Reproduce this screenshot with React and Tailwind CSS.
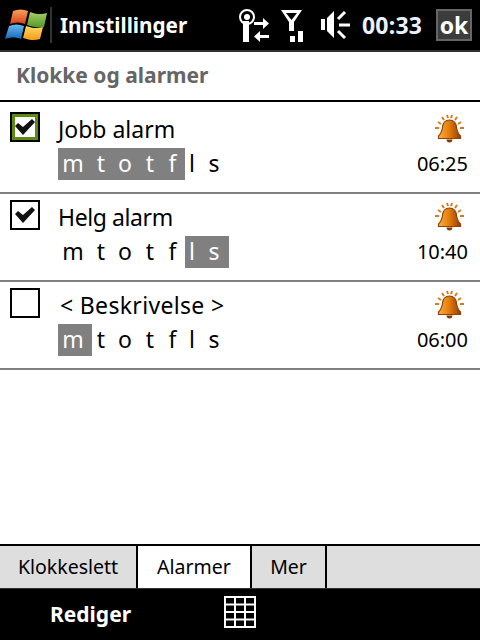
import React from "react";

const cells = [
  ["m", "w-[34px] pr-1"],
  ["t", "w-[18px]"],
  ["o", "w-[30px]"],
  ["t", "w-[20px]"],
  ["f", "w-[25px]"],
  ["l", "w-[14px]"],
  ["s", "w-[30px]"],
];

function Days({ active }) {
  return (
    <div className="flex h-8 text-[23px] leading-8 text-black">
      {cells.map(([l, cls], i) => (
        <span
          key={i}
          className={"flex items-center justify-center pb-[2px] " + cls + " " + (active.includes(i) ? "bg-[#808080] text-white" : "")}
        >
          {l}
        </span>
      ))}
    </div>
  );
}

function Bell() {
  return (
    <svg width="32" height="30" viewBox="0 0 32 30">
      <defs>
        <linearGradient id="bellg" x1="0" y1="0" x2="1" y2="0">
          <stop offset="0" stopColor="#f9b040" />
          <stop offset="0.45" stopColor="#e8800e" />
          <stop offset="1" stopColor="#983c04" />
        </linearGradient>
      </defs>
      <g stroke="#d9791a" strokeWidth="2" fill="none">
        <path d="M8 3l2 3M13 1l1 3M18 1l-1 3M23 3l-2 3M4 8l3 2M27 8l-3 2M1 14h4M26 14h4" />
      </g>
      <path d="M15.500 6c-4.500 0-6.500 3-7 7-.4 4-1.500 6.500-4 9v2.500h22V22c-2.500-2.500-3.600-5-4-9-.5-4-2.500-7-7-7z" fill="url(#bellg)" stroke="#8e4208" strokeWidth="1.200" />
      <path d="M12.500 25.500h6c0 2-1.300 3-3 3s-3-1-3-3z" fill="#7c3806" />
    </svg>
  );
}

function Check({ checked, focus }) {
  return (
    <div className={"flex h-[30px] w-[30px] items-center justify-center border-2 border-black bg-white " + (focus ? "shadow-[inset_0_0_0_3px_#5c8a12]" : "")}>
      {checked && (
        <svg width="22" height="18" viewBox="0 0 22 18">
          <path d="M1 8l3-3 5 4 9-8 3 3-12 13z" fill="#111" />
        </svg>
      )}
    </div>
  );
}

function Row({ title, titleClass, active, time, checked, focus, first }) {
  return (
    <div className={"flex flex-none border-b-2 border-[#808080] pl-[10px] pr-3 " + (first ? "h-[92px] pt-[10px]" : "h-[88px] pt-[6px]")}>
      <Check checked={checked} focus={focus} />
      <div className="ml-[18px] flex flex-1 flex-col">
        <div className={"h-9 text-[23px] leading-[34px] text-black " + (titleClass || "")}>{title}</div>
        <Days active={active} />
      </div>
      <div className="flex flex-col items-end">
        <div className="mr-[2px] mt-[2px] h-[35px]"><Bell /></div>
        <div className="text-[20px] leading-[30px] text-black">{time}</div>
      </div>
    </div>
  );
}

export default function App() {
  return (
    <div className="flex h-[640px] w-[480px] flex-col overflow-hidden bg-white font-['Noto_Sans','Open_Sans',sans-serif]">
      <header className="flex h-[52px] flex-none items-center border-b-2 border-[#303030] bg-black text-white">
        <svg className="ml-1 flex-none" width="44" height="38" viewBox="0 0 44 38">
          <defs>
            <linearGradient id="wr" x1="0" y1="0" x2="0" y2="1"><stop offset="0" stopColor="#f8a45a" /><stop offset="1" stopColor="#d8401c" /></linearGradient>
            <linearGradient id="wg" x1="0" y1="0" x2="0" y2="1"><stop offset="0" stopColor="#a8d060" /><stop offset="1" stopColor="#54982a" /></linearGradient>
            <linearGradient id="wb" x1="0" y1="0" x2="0" y2="1"><stop offset="0" stopColor="#68b8ec" /><stop offset="1" stopColor="#1668bc" /></linearGradient>
            <linearGradient id="wy" x1="0" y1="0" x2="0" y2="1"><stop offset="0" stopColor="#fcd860" /><stop offset="1" stopColor="#f49c1c" /></linearGradient>
          </defs>
          <path d="M9 5c5-2 10-2 15 0l-3 13c-5-2-10-2-15 0z" fill="url(#wr)" />
          <path d="M26 6c5 2 11 3 17 1l-3 14c-6 1-11 0-17-2z" fill="url(#wg)" />
          <path d="M5 20c5-2 10-2 15 0l-3 13c-5-2-11-2-16 0z" fill="url(#wb)" />
          <path d="M22 20c6 2 11 3 17 1l-3 12c-6 2-11 1-17-1z" fill="url(#wy)" />
        </svg>
        <div className="ml-[2px] h-9 w-[2px] flex-none bg-[#333]" />
        <div className="ml-[8px] w-[178px] flex-none text-[20.700px] font-bold leading-none">Innstillinger</div>
        <svg className="flex-none" width="32" height="33" viewBox="0 0 32 33">
          <circle cx="9" cy="8" r="7" fill="none" stroke="#fff" strokeWidth="2" />
          <circle cx="9" cy="8" r="3" fill="#fff" />
          <rect x="5" y="12" width="6" height="21" fill="#fff" />
          <path d="M16 13h9v-4l6 5.500-6 5.500v-4h-9zM31 26h-9v-4l-6 5.500 6 5.500v-4h9z" fill="#fff" />
        </svg>
        <svg className="ml-[11px] flex-none" width="22" height="33" viewBox="0 0 22 33">
          <path d="M0 1h21l-8 12v9H8v-9zM5 4l5.500 7L16 4z" fill="#fff" fillRule="evenodd" />
          <rect x="9" y="27" width="5" height="6" fill="#fff" />
          <rect x="17" y="22" width="5" height="11" fill="#fff" />
        </svg>
        <svg className="ml-[18px] flex-none" width="29" height="30" viewBox="0 0 29 30">
          <path d="M0 9h4v11H0zM6 8l7-7v27l-7-7z" fill="#fff" />
          <path d="M17 9l7-7M18 15h11M17 21l7 7" stroke="#fff" strokeWidth="3" fill="none" />
        </svg>
        <div className="ml-[12px] w-[60px] flex-none whitespace-nowrap text-[23px] font-bold leading-none tracking-[0.2px] text-[#eaf2ff]">00:33</div>
        <div className="ml-[14px] flex h-8 w-[36px] flex-none items-center justify-center border-2 border-[#666] bg-[#3c3c3c] text-[23px] font-bold leading-none">ok</div>
      </header>

      <div className="flex h-[50px] flex-none items-center border-b-2 border-black pl-4 text-[21px] font-bold text-[#666666]">
        Klokke og alarmer
      </div>

      <Row first title="Jobb alarm" active={[0, 1, 2, 3, 4]} time="06:25" checked focus />
      <Row title="Helg alarm" titleClass="tracking-[-0.4px]" active={[5, 6]} time="10:40" checked />
      <Row title="< Beskrivelse >" titleClass="pl-[2px] tracking-[0.33px]" active={[0]} time="06:00" />

      <div className="flex-1" />

      <nav className="flex h-[44px] flex-none border-t-2 border-black bg-[#dedede] text-[19.500px] leading-none text-black">
        <div className="flex w-[138px] items-center justify-center border-r-2 border-black">Klokkeslett</div>
        <div className="flex w-[112px] items-center justify-center bg-white">Alarmer</div>
        <div className="flex w-[77px] items-center justify-center border-x-2 border-black">Mer</div>
      </nav>

      <footer className="flex h-[52px] flex-none items-center border-t border-[#303030] bg-black text-white">
        <div className="ml-[50px] w-[174px] text-[21px] font-bold leading-none">Rediger</div>
        <svg width="32" height="32" viewBox="0 0 32 32" className="mt-[-5px]">
          <path d="M1 1h30v30H1zM1 8.500h30M1 16h30M1 23.500h30M11 1v30M21 1v30" fill="none" stroke="#fff" strokeWidth="2" />
        </svg>
      </footer>
    </div>
  );
}
